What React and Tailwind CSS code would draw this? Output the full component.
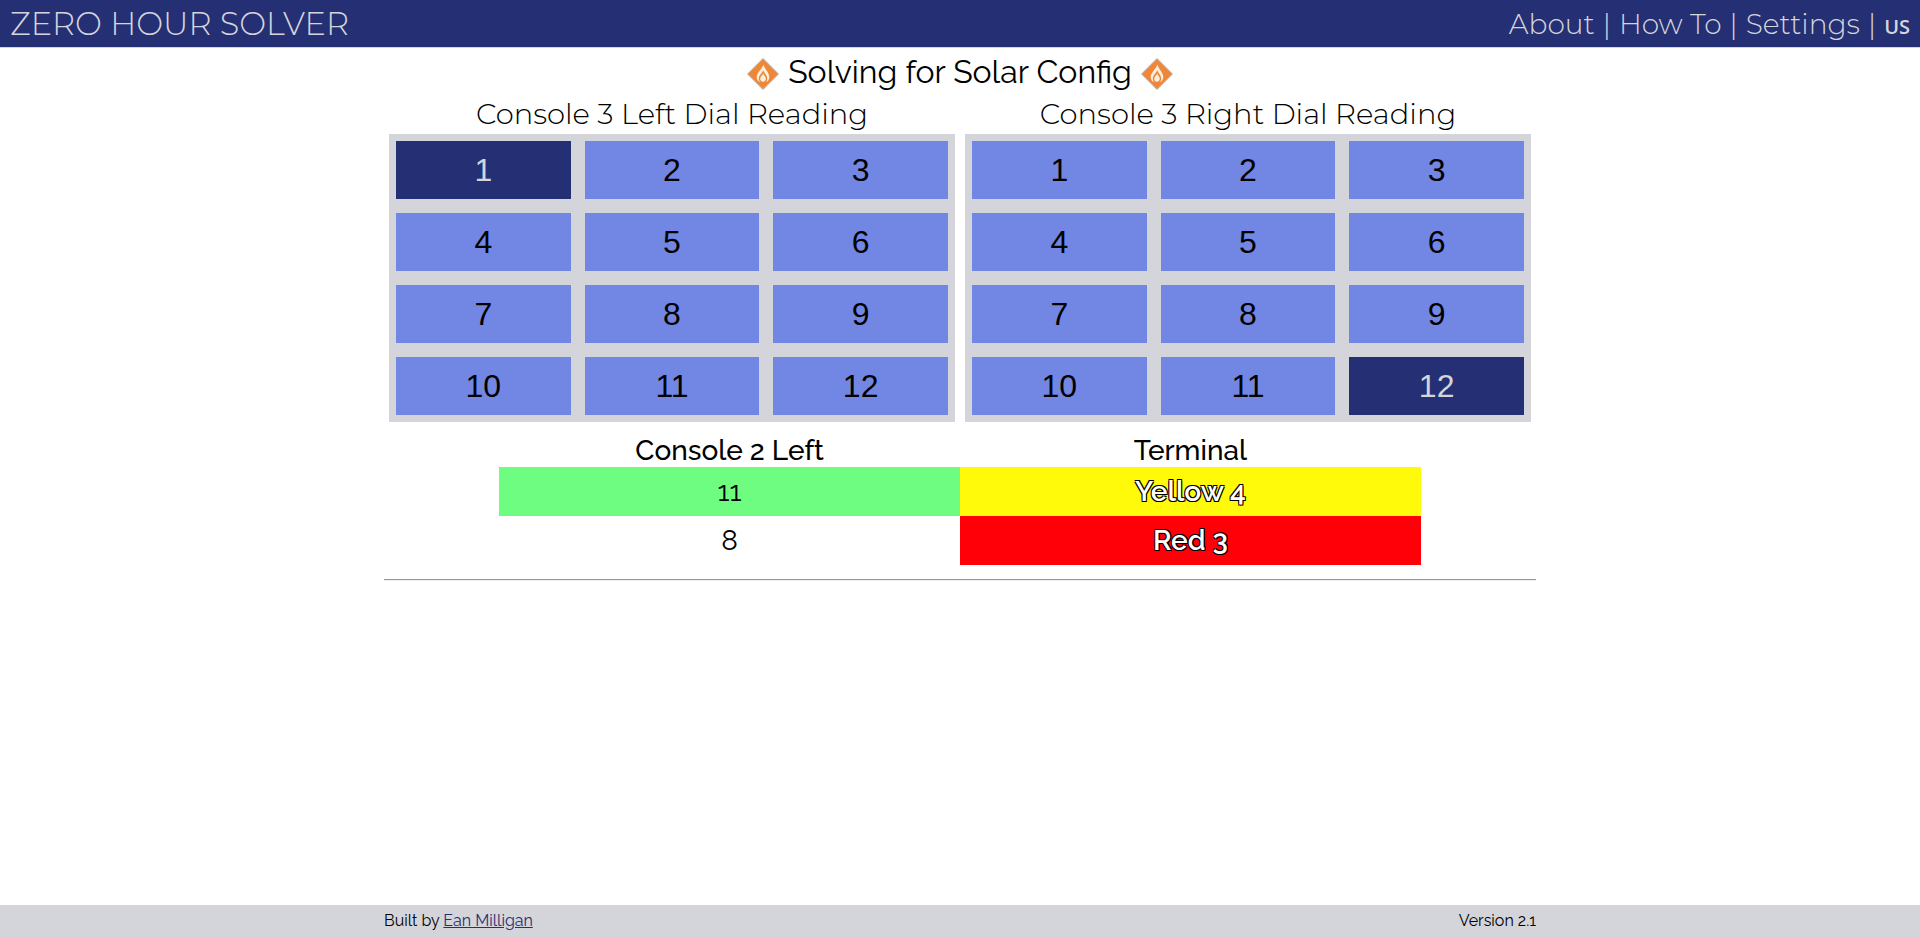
const DIAL = [1, 2, 3, 4, 5, 6, 7, 8, 9, 10, 11, 12];
const OUTLINE = "[text-shadow:-1px_-1px_0_#000,1px_-1px_0_#000,-1px_1px_0_#000,1px_1px_0_#000]";

function SolarIcon() {
  return (
    <svg viewBox="0 0 32 32" className="mt-1 size-8 shrink-0" aria-hidden="true">
      <path d="M16 .5 31.5 16 16 31.5.5 16Z" fill="#ee8838" stroke="#b9b4b4" strokeWidth="1" />
      <path
        fill="#fdeedd"
        fillRule="evenodd"
        d="M16.4 6.5c.6 3.600 5.900 8.100 5.900 12.500 0 2.400-1.400 4.300-3.600 5.300 1-1 1.500-2.200 1.500-3.600 0-3.400-3-5.500-4-8.400-1 2.900-4.400 5-4.400 8.400 0 1.400.6 2.600 1.600 3.600-2.300-1-3.700-2.900-3.700-5.300 0-4.400 6.100-8.900 6.700-12.500Z"
      />
      <path d="M16.100 15.500c.7 2 2.700 3.200 2.700 5.300 0 1.700-1.200 2.900-2.800 2.900s-2.800-1.200-2.800-2.900c0-2.100 2.200-3.300 2.900-5.300Z" fill="#fdeedd" />
    </svg>
  );
}

function Dial({ title, selected }) {
  return (
    <section className="flex-1">
      <h2 className="text-center font-['Montserrat',Inter,sans-serif] text-[29px] leading-10 font-light">{title}</h2>
      <div className="grid grid-cols-3 gap-[14px] bg-[#d4d5db] p-[7px]">
        {DIAL.map((n) => (
          <button
            key={n}
            type="button"
            aria-pressed={n === selected}
            className={
              "h-[58px] font-['Liberation_Sans',Arial,sans-serif] text-[32px] leading-none " +
              (n === selected ? "bg-[#252f73] text-[#d4d5db]" : "bg-[#7287e4] text-black")
            }
          >
            {n}
          </button>
        ))}
      </div>
    </section>
  );
}

export default function App() {
  return (
    <div className="flex min-h-screen flex-col bg-white font-['Raleway',Lato,sans-serif] text-black">
      <header className="flex h-12 items-center justify-between border-b border-[#d4d5db] bg-[#252f73] px-[10px] font-['Montserrat',Inter,sans-serif] font-light text-[#d4d5db]">
        <h1 className="text-[32px] leading-none">ZERO HOUR SOLVER</h1>
        <nav className="flex items-baseline gap-2 text-[28px] leading-none">
          <a href="#about">About</a>
          <span>|</span>
          <a href="#how-to">How To</a>
          <span>|</span>
          <a href="#settings">Settings</a>
          <span>|</span>
          <a href="#language" className="font-['Open_Sans',sans-serif] text-[20px] font-semibold uppercase">us</a>
        </nav>
      </header>

      <main className="mx-auto w-3/5 flex-1">
        <div className="flex h-[46px] items-start justify-center gap-[9px] pt-[6px]">
          <SolarIcon />
          <p className="text-[32px] leading-9 font-normal">Solving for Solar Config</p>
          <SolarIcon />
        </div>
        <div className="flex gap-[10px] px-[5px]">
          <Dial title="Console 3 Left Dial Reading" selected={1} />
          <Dial title="Console 3 Right Dial Reading" selected={12} />
        </div>

        <table className="mx-auto mt-3 w-4/5 table-fixed border-collapse text-center text-[28px] leading-8">
          <thead>
            <tr className="h-[33px]">
              <th scope="col" className="p-0 font-medium">Console 2 Left</th>
              <th scope="col" className="p-0 font-medium">Terminal</th>
            </tr>
          </thead>
          <tbody>
            <tr className="h-[49px]">
              <td className="bg-[#6efd80] p-0">11</td>
              <td className={"bg-[#fffa0a] p-0 font-semibold text-white " + OUTLINE}>Yellow 4</td>
            </tr>
            <tr className="h-[49px]">
              <td className="p-0">8</td>
              <td className={"bg-[#ff0009] p-0 font-semibold text-white " + OUTLINE}>Red 3</td>
            </tr>
          </tbody>
        </table>
        <hr className="mt-[14px] border-t border-b border-t-[#9a9a9a] border-b-[#eeeeee]" />
      </main>

      <footer className="h-[33px] bg-[#d4d5db]">
        <div className="mx-auto flex w-3/5 justify-between text-[16px] leading-8">
          <p>
            Built by <a href="#author" className="text-[#252f73] underline">Ean Milligan</a>
          </p>
          <p>Version 2.1</p>
        </div>
      </footer>
    </div>
  );
}
